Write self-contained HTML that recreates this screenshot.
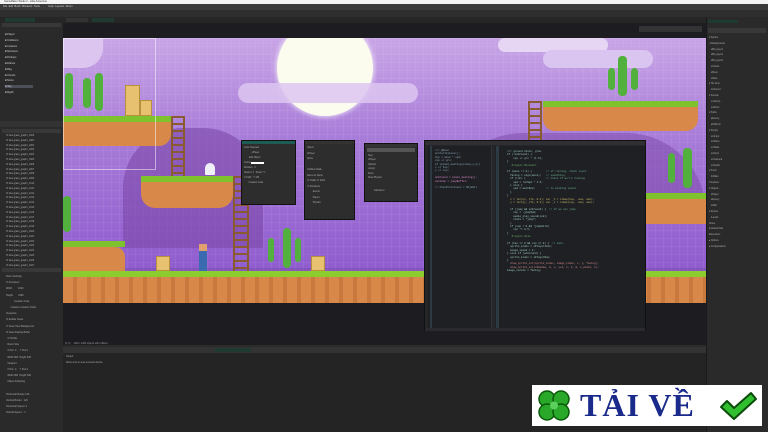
<!DOCTYPE html>
<html><head><meta charset="utf-8"><style>
*{margin:0;padding:0;box-sizing:border-box}
body{width:768px;height:432px;overflow:hidden;background:#2b2b2b;font-family:"Liberation Sans",sans-serif;font-size:3px;color:#bbb;position:relative}
.a{position:absolute}
.t{font-size:3px;color:#ccc;white-space:nowrap}
.code{font-family:"Liberation Mono",monospace;font-size:2.6px;line-height:3.4px;white-space:pre;color:#9cb}
</style></head><body>
<!-- title / menu / toolbar -->
<div class="a" style="left:0;top:0;width:768px;height:4px;background:#f4f4f4"></div>
<div class="a t" style="left:4px;top:0;color:#333;font-size:2.5px">GameMaker Studio 2 - Little Adventure</div>
<div class="a" style="left:0;top:4px;width:768px;height:6px;background:#3a3a3a"></div>
<div class="a t" style="left:3px;top:5px;font-size:2.6px">File&nbsp;&nbsp;Edit&nbsp;&nbsp;Build&nbsp;&nbsp;Windows&nbsp;&nbsp;Tools&nbsp;&nbsp;&nbsp;&nbsp;&nbsp;&nbsp;&nbsp;&nbsp;&nbsp;&nbsp;&nbsp;&nbsp;Help&nbsp;&nbsp;Layouts&nbsp;&nbsp;Room</div>
<div class="a" style="left:0;top:10px;width:768px;height:7px;background:#2e2e2e"></div>
<div class="a" style="left:0;top:17px;width:768px;height:6px;background:#262626"></div>
<div class="a" style="left:5px;top:18px;width:30px;height:4px;background:#1f3a30"></div>
<div class="a" style="left:66px;top:18px;width:22px;height:4px;background:#333"></div>
<div class="a" style="left:92px;top:18px;width:22px;height:4px;background:#1f3a30"></div>

<!-- left panel -->
<div class="a" style="left:0;top:23px;width:63px;height:409px;background:#2a2a2a"></div>
<div class="a" style="left:2px;top:23px;width:59px;height:4px;background:#383838"></div>
<div class="a t" style="left:5px;top:32px;line-height:5.8px;font-size:2.6px">■ Player<br>■ Collisions<br>■ Instance<br>■ Monsters<br>■ Pickups<br>■ Effects<br>■ Bkg<br>■ Clouds<br>■ Moon<br><span style="background:#4a4f58">■ Sky&nbsp;&nbsp;&nbsp;&nbsp;&nbsp;&nbsp;&nbsp;&nbsp;&nbsp;&nbsp;&nbsp;&nbsp;&nbsp;&nbsp;&nbsp;&nbsp;&nbsp;&nbsp;&nbsp;&nbsp;&nbsp;&nbsp;&nbsp;&nbsp;&nbsp;&nbsp;&nbsp;&nbsp;&nbsp;</span><br>■ BgAll</div>
<div class="a" style="left:0;top:121px;width:63px;height:6px;background:#333"></div>
<div class="a" style="left:2px;top:129px;width:59px;height:4px;background:#383838"></div>
<div class="a t" style="left:6px;top:134px;line-height:4.8px;font-size:2.4px;color:#aaa">☑ tiles.grass_graphi_1000<br>☑ tiles.grass_graphi_1001<br>☑ tiles.grass_graphi_1002<br>☑ tiles.grass_graphi_1003<br>☑ tiles.grass_graphi_1004<br>☑ tiles.grass_graphi_1005<br>☑ tiles.grass_graphi_1006<br>☑ tiles.grass_graphi_1007<br>☑ tiles.grass_graphi_1008<br>☑ tiles.grass_graphi_1009<br>☑ tiles.grass_graphi_1010<br>☑ tiles.grass_graphi_1011<br>☑ tiles.grass_graphi_1012<br>☑ tiles.grass_graphi_1013<br>☑ tiles.grass_graphi_1014<br>☑ tiles.grass_graphi_1015<br>☑ tiles.grass_graphi_1016<br>☑ tiles.grass_graphi_1017<br>☑ tiles.grass_graphi_1018<br>☑ tiles.grass_graphi_1019<br>☑ tiles.grass_graphi_1020<br>☑ tiles.grass_graphi_1021<br>☑ tiles.grass_graphi_1022<br>☑ tiles.grass_graphi_1023<br>☑ tiles.grass_graphi_1024<br>☑ tiles.grass_graphi_1025<br>☑ tiles.grass_graphi_1026<br>☑ tiles.grass_graphi_1027</div>
<div class="a" style="left:2px;top:268px;width:59px;height:4px;background:#383838"></div>
<div class="a t" style="left:6px;top:274px;line-height:6.2px;font-size:2.4px;color:#aaa">Room Settings<br>☐ Persistent<br>Width&nbsp;&nbsp;&nbsp;&nbsp;&nbsp;&nbsp;&nbsp;&nbsp;&nbsp;1920<br>Height&nbsp;&nbsp;&nbsp;&nbsp;&nbsp;&nbsp;&nbsp;&nbsp;1080<br>&nbsp;&nbsp;&nbsp;&nbsp;&nbsp;&nbsp;&nbsp;&nbsp;&nbsp;&nbsp;&nbsp;&nbsp;Creation Code<br>&nbsp;&nbsp;&nbsp;&nbsp;&nbsp;&nbsp;&nbsp;Instance Creation Order<br>Viewports<br>☑ Enable Views<br>☐ Clear View Background<br>☑ Clear Display Buffer<br>&nbsp;&nbsp;☑ Visible<br>&nbsp;&nbsp;Room Size<br>&nbsp;&nbsp;X Pos&nbsp;&nbsp;0&nbsp;&nbsp;&nbsp;&nbsp;&nbsp;Y Pos 0<br>&nbsp;&nbsp;Width 960&nbsp;&nbsp;Height 540<br>&nbsp;&nbsp;Viewport<br>&nbsp;&nbsp;X Pos&nbsp;&nbsp;0&nbsp;&nbsp;&nbsp;&nbsp;&nbsp;Y Pos 0<br>&nbsp;&nbsp;Width 960&nbsp;&nbsp;Height 540<br>&nbsp;&nbsp;Object Following<br><br>Horizontal Border 120<br>Vertical Border&nbsp;&nbsp;&nbsp;120<br>Horizontal Speed -1<br>Vertical Speed&nbsp;&nbsp;&nbsp;-1</div>

<!-- canvas -->
<div class="a" style="left:63px;top:23px;width:643px;height:322px;background:#1d1d21"></div>
<div class="a" style="left:63px;top:38px;width:643px;height:265px;background:linear-gradient(#c9a6e6 0%,#a67ad8 40%,#8a55cc 100%);overflow:hidden">
  <div class="a" style="left:0;top:0;width:643px;height:265px;background-image:linear-gradient(rgba(255,255,255,.06) 1px,transparent 1px),linear-gradient(90deg,rgba(255,255,255,.06) 1px,transparent 1px);background-size:8px 8px"></div>
  <!-- moon -->
  <div class="a" style="left:214px;top:-18px;width:96px;height:96px;border-radius:50%;background:#fbfbee;box-shadow:0 0 6px #fff"></div>
  <!-- clouds -->
  <div class="a" style="left:175px;top:45px;width:180px;height:20px;border-radius:10px;background:#dcc6f0;opacity:.85"></div>
  <div class="a" style="left:435px;top:0;width:110px;height:14px;border-radius:7px;background:#e6d6f4"></div>
  <div class="a" style="left:480px;top:12px;width:110px;height:18px;border-radius:9px;background:#dac4f0"></div>
  <div class="a" style="left:0;top:0;width:40px;height:30px;border-radius:0 0 20px 0;background:#dcc6f0"></div>
  <!-- hills -->
  <div class="a" style="left:60px;top:90px;width:140px;height:120px;border-radius:60px 60px 0 0;background:#7b48a8;opacity:.6"></div>
  <div class="a" style="left:380px;top:95px;width:263px;height:80px;border-radius:80px 80px 0 0;background:#7b48a8;opacity:.5"></div>
  <div class="a" style="left:0;top:230px;width:643px;height:35px;background:#7545a0;opacity:.4"></div>
  <!-- platforms -->
  <div class="a" style="left:0;top:78px;width:108px;height:6px;background:#7ec32e"></div>
  <div class="a" style="left:0;top:84px;width:108px;height:24px;border-radius:0 0 12px 0;background:#d8894a"></div>
  <div class="a" style="left:78px;top:138px;width:92px;height:6px;background:#7ec32e"></div>
  <div class="a" style="left:78px;top:144px;width:92px;height:26px;border-radius:0 0 14px 14px;background:#d8894a"></div>
  <div class="a" style="left:480px;top:63px;width:155px;height:6px;background:#7ec32e"></div>
  <div class="a" style="left:480px;top:69px;width:155px;height:24px;border-radius:0 0 12px 12px;background:#d8894a"></div>
  <div class="a" style="left:582px;top:155px;width:61px;height:6px;background:#7ec32e"></div>
  <div class="a" style="left:582px;top:161px;width:61px;height:25px;background:#d8894a"></div>
  <div class="a" style="left:0;top:203px;width:62px;height:6px;background:#7ec32e"></div>
  <div class="a" style="left:0;top:209px;width:62px;height:24px;border-radius:0 10px 0 0;background:#d8894a"></div>
  <div class="a" style="left:0;top:233px;width:643px;height:6px;background:#8ccc2e"></div>
  <div class="a" style="left:0;top:239px;width:643px;height:26px;background:repeating-linear-gradient(90deg,#d8894a 0 10px,#c87a3e 10px 14px)"></div>
  <!-- ladders -->
  <div class="a" style="left:108px;top:78px;width:14px;height:60px;background:repeating-linear-gradient(#8a5a30 0 2px,transparent 2px 7px);border-left:2px solid #8a5a30;border-right:2px solid #8a5a30"></div>
  <div class="a" style="left:170px;top:138px;width:16px;height:95px;background:repeating-linear-gradient(#8a5a30 0 2px,transparent 2px 7px);border-left:2px solid #8a5a30;border-right:2px solid #8a5a30"></div>
  <div class="a" style="left:465px;top:63px;width:14px;height:45px;background:repeating-linear-gradient(#8a5a30 0 2px,transparent 2px 7px);border-left:2px solid #8a5a30;border-right:2px solid #8a5a30"></div>
  <!-- crates -->
  <div class="a" style="left:62px;top:47px;width:15px;height:31px;background:#e7c070;border:1px solid #b8903c"></div>
  <div class="a" style="left:77px;top:62px;width:12px;height:16px;background:#e7c070;border:1px solid #b8903c"></div>
  <div class="a" style="left:93px;top:218px;width:14px;height:15px;background:#e7c070;border:1px solid #b8903c"></div>
  <div class="a" style="left:248px;top:218px;width:14px;height:15px;background:#e7c070;border:1px solid #b8903c"></div>
  <!-- cacti -->
  <div class="a" style="left:2px;top:35px;width:8px;height:36px;border-radius:4px;background:#52b03c"></div>
  <div class="a" style="left:20px;top:40px;width:8px;height:30px;border-radius:4px;background:#52b03c"></div>
  <div class="a" style="left:32px;top:35px;width:8px;height:38px;border-radius:4px;background:#52b03c"></div>
  <div class="a" style="left:555px;top:18px;width:9px;height:40px;border-radius:4px;background:#52b03c"></div>
  <div class="a" style="left:545px;top:30px;width:7px;height:22px;border-radius:4px;background:#52b03c"></div>
  <div class="a" style="left:568px;top:30px;width:7px;height:22px;border-radius:4px;background:#52b03c"></div>
  <div class="a" style="left:620px;top:110px;width:9px;height:40px;border-radius:4px;background:#52b03c"></div>
  <div class="a" style="left:605px;top:115px;width:7px;height:30px;border-radius:4px;background:#52b03c"></div>
  <div class="a" style="left:220px;top:190px;width:8px;height:40px;border-radius:4px;background:#52b03c"></div>
  <div class="a" style="left:205px;top:200px;width:6px;height:24px;border-radius:3px;background:#52b03c"></div>
  <div class="a" style="left:232px;top:200px;width:6px;height:24px;border-radius:3px;background:#52b03c"></div>
  <div class="a" style="left:0;top:158px;width:8px;height:36px;border-radius:4px;background:#52b03c"></div>
  <!-- ghost, player -->
  <div class="a" style="left:142px;top:125px;width:10px;height:12px;border-radius:5px 5px 1px 1px;background:#f0f0f8"></div>
  <div class="a" style="left:136px;top:206px;width:8px;height:27px;background:#3a6bb0;border-top:7px solid #e0a070"></div>
</div>
<div class="a" style="left:63px;top:38px;width:93px;height:132px;border:1px solid rgba(255,255,255,.5)"></div>
<div class="a" style="left:639px;top:26px;width:63px;height:6px;background:#333"></div>

<!-- dialogs -->
<div class="a" style="left:241px;top:140px;width:55px;height:65px;background:#2d2d2d;border:1px solid #111">
  <div style="height:3px;background:#1f5c55"></div>
  <div class="t" style="padding:2px;line-height:5px;font-size:2.3px;color:#aaa">Color Selected<br>&nbsp;&nbsp;&nbsp;&nbsp;&nbsp;&nbsp;&nbsp;&nbsp;&nbsp;&nbsp;&nbsp;&nbsp;oPlayer<br>&nbsp;&nbsp;&nbsp;&nbsp;&nbsp;&nbsp;&nbsp;&nbsp;Edit Object<br>Colour <span style="background:#fff">&nbsp;&nbsp;&nbsp;&nbsp;&nbsp;&nbsp;&nbsp;&nbsp;&nbsp;&nbsp;&nbsp;&nbsp;&nbsp;&nbsp;&nbsp;&nbsp;&nbsp;&nbsp;&nbsp;&nbsp;</span><br>Rotation&nbsp;&nbsp;&nbsp;0<br>Scale X 1&nbsp;&nbsp;&nbsp;Scale Y 1<br>X 1920&nbsp;&nbsp;&nbsp;Y 160<br>&nbsp;&nbsp;&nbsp;&nbsp;&nbsp;&nbsp;&nbsp;Creation Code</div>
</div>
<div class="a" style="left:304px;top:140px;width:51px;height:80px;background:#2d2d2d;border:1px solid #111">
  <div style="height:3px;background:#333"></div>
  <div class="t" style="padding:2px;line-height:5.5px;font-size:2.3px;color:#aaa">Object<br>oPlayer<br>Sprite<br><br>Collision Mask<br>Same As Sprite<br>☐ Visible ☐ Solid<br>☐ Persistent<br>&nbsp;&nbsp;&nbsp;&nbsp;&nbsp;&nbsp;&nbsp;&nbsp;&nbsp;Events<br>&nbsp;&nbsp;&nbsp;&nbsp;&nbsp;&nbsp;&nbsp;&nbsp;&nbsp;Parent<br>&nbsp;&nbsp;&nbsp;&nbsp;&nbsp;&nbsp;&nbsp;&nbsp;&nbsp;Physics</div>
</div>
<div class="a" style="left:364px;top:143px;width:54px;height:59px;background:#2d2d2d;border:1px solid #111">
  <div style="height:3px;background:#333"></div>
  <div style="margin:1px 2px;height:4px;background:#555"></div>
  <div class="t" style="padding:1px 3px;line-height:4.4px;font-size:2.3px;color:#aaa">Step<br>oPlayer<br>oShield<br>oJump<br>Draw<br>Draw Physics<br><br><br>&nbsp;&nbsp;&nbsp;&nbsp;&nbsp;&nbsp;&nbsp;&nbsp;&nbsp;Add Event</div>
</div>

<!-- code window -->
<div class="a" style="left:424px;top:140px;width:222px;height:191px;background:#252629;border:1px solid #111">
  <div style="height:4px;background:#303034"></div>
  <div class="a" style="left:3px;top:5px;width:64px;height:182px;background:#1f2023;border-right:1px solid #333"></div>
  <div class="a" style="left:5px;top:5px;width:2px;height:182px;background:#2c3a44"></div>
  <div class="a code" style="left:10px;top:8px;color:#8ab">/// @desc<br>scrCollisions();<br>hsp = move * spd;<br>vsp += grv;<br>if (place_meeting(x+hsp,y,o))<br>x += hsp;<br>y += vsp;<br><br><span style="color:#d8c">onGround = place_meeting();</span><br><span style="color:#d8c">canJump = jumpBuffer;</span><br><br>// CheckCollision = ObjWall</div>
  <div class="a" style="left:70px;top:5px;width:150px;height:182px;background:#1f2023"></div>
  <div class="a" style="left:71px;top:5px;width:3px;height:182px;background:#2c3a44"></div>
  <div class="a code" style="left:82px;top:9px">/// ground check, grav
if (!onGround) {
    vsp += grv * (1.5);
}
<span style="color:#6a6">   #region Movement</span>

if (move != 0) {         <span style="color:#6a8">// if running, check input</span>
  facing = sign(move);   <span style="color:#6a8">// something</span>
  if (run) {             <span style="color:#6a8">// check if we're running</span>
    spd = runSpd * 1.5;
  } else {
    spd = walkSpd;       <span style="color:#6a8">// to walking speed</span>
  }
}
<span style="color:#cb6">  x = lerp(x, xTo, 0.2); var _h = clamp(hsp, -max, max);</span>
<span style="color:#cb6">  y = lerp(y, yTo, 0.2); var _v = clamp(vsp, -max, max);</span>

  if (jump &amp;&amp; onGround) {  <span style="color:#6a8">// if we can jump</span>
    vsp = -jumpSpd;
    audio_play_sound(snd);
    state = "jump";
  }
  if (vsp &lt; 0 &amp;&amp; !jumpHeld)
    vsp *= 0.5;
}
<span style="color:#6a6">   #region Anim</span>

if (hsp == 0 &amp;&amp; vsp == 0) {  <span style="color:#6a8">// idle</span>
  sprite_index = sPlayerIdle;
  image_speed = 1;
} else if (onGround) {
  sprite_index = sPlayerRun;
}
<span style="color:#c88">  draw_sprite_ext(sprite_index, image_index, x, y, facing);</span>
<span style="color:#c88">  draw_sprite_ext(sShadow, 0, x, y+2, 1, 1, 0, c_white, 1);</span>
image_xscale = facing;</div>
  <div class="a" style="left:0;top:187px;width:220px;height:3px;background:#2b2b2e"></div>
</div>

<!-- status + output -->
<div class="a t" style="left:65px;top:343px;font-size:2.3px;color:#999">(0, 0)&nbsp;&nbsp;&nbsp;&nbsp;&nbsp;1920 x 1080 objects with collision</div>
<div class="a" style="left:63px;top:347px;width:643px;height:6px;background:#333"></div>
<div class="a" style="left:215px;top:348px;width:36px;height:4px;background:#1f3a30"></div>
<div class="a" style="left:63px;top:353px;width:643px;height:79px;background:#242424"></div>
<div class="a t" style="left:66px;top:355px;font-size:2.4px;color:#aaa">Output</div>
<div class="a t" style="left:66px;top:361px;font-size:2.4px;color:#aaa">Room size in view exceeds device.</div>

<!-- right panel -->
<div class="a" style="left:706px;top:17px;width:62px;height:415px;background:#2a2a2a;border-left:1px solid #1a1a1a"></div>
<div class="a" style="left:708px;top:20px;width:30px;height:3px;background:#1f3a30"></div>
<div class="a" style="left:708px;top:28px;width:58px;height:5px;background:#383838"></div>
<div class="a t" style="left:709px;top:36px;line-height:5.8px;font-size:2.3px;color:#aaa">▾ Sprites<br>&nbsp;▾ Backgrounds<br>&nbsp;&nbsp;&nbsp;sBG_layer1<br>&nbsp;&nbsp;&nbsp;sBG_layer2<br>&nbsp;&nbsp;&nbsp;sBG_layer3<br>&nbsp;&nbsp;&nbsp;sClouds<br>&nbsp;&nbsp;&nbsp;sMoon<br>&nbsp;&nbsp;&nbsp;sStars<br>▾ Tile Sets<br>&nbsp;&nbsp;&nbsp;tsGround<br>▾ Sounds<br>&nbsp;&nbsp;&nbsp;sndJump<br>&nbsp;&nbsp;&nbsp;sndCoin<br>▾ Paths<br>&nbsp;&nbsp;&nbsp;pEnemy<br>&nbsp;&nbsp;&nbsp;pPlatform<br>▾ Scripts<br>&nbsp;&nbsp;&nbsp;scrInput<br>&nbsp;&nbsp;&nbsp;scrMove<br>&nbsp;&nbsp;&nbsp;scrState<br>&nbsp;&nbsp;&nbsp;scrAnim<br>&nbsp;&nbsp;&nbsp;scrCamera<br>&nbsp;&nbsp;&nbsp;scrAudio<br>▾ Fonts<br>&nbsp;&nbsp;&nbsp;fntMain<br>Timelines<br>▾ Objects<br>&nbsp;&nbsp;&nbsp;oPlayer<br>&nbsp;&nbsp;&nbsp;oEnemy<br>&nbsp;&nbsp;&nbsp;oWall<br>▾ Rooms<br>&nbsp;&nbsp;&nbsp;rLevel1<br>Notes<br>Included Files<br>Extensions<br>▸ Options<br>▸ Configurations</div>

<!-- logo -->
<div class="a" style="left:532px;top:385px;width:230px;height:41px;background:#fff"></div>
<div class="a" style="left:534px;top:387px;width:40px;height:37px">
<svg width="40" height="37" viewBox="0 0 40 37"><g fill="#2aa82a" stroke="#0a5a0a" stroke-width="1.5"><circle cx="13" cy="12" r="8"/><circle cx="27" cy="12" r="8"/><circle cx="13" cy="25" r="8"/><circle cx="27" cy="25" r="8"/></g><circle cx="20" cy="18.5" r="4" fill="#5cd05c"/></svg></div>
<div class="a" style="left:580px;top:386px;font-family:'Liberation Serif',serif;font-weight:bold;font-size:32px;line-height:38px;color:#1a2a8a;white-space:nowrap;letter-spacing:1px">TẢI VỀ</div>
<div class="a" style="left:718px;top:390px">
<svg width="40" height="32" viewBox="0 0 40 32"><path d="M3 17 L9 11 L16 18 L33 3 L38 9 L16 29 Z" fill="#2fbf2f" stroke="#0a4a0a" stroke-width="2" stroke-linejoin="round"/></svg></div>
</body></html>
